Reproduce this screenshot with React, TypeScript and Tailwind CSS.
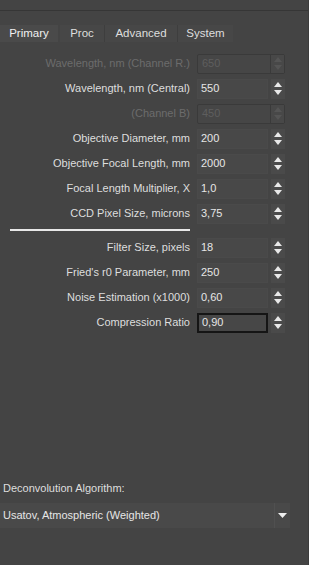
import React from "react";

const rows = [
  { label: "Wavelength, nm (Channel R.)", value: "650", disabled: true },
  { label: "Wavelength, nm (Central)", value: "550" },
  { label: "(Channel B)", value: "450", disabled: true },
  { label: "Objective Diameter, mm", value: "200" },
  { label: "Objective Focal Length, mm", value: "2000" },
  { label: "Focal Length Multiplier, X", value: "1,0" },
  { label: "CCD Pixel Size, microns", value: "3,75" },
];

const rows2 = [
  { label: "Filter Size, pixels", value: "18" },
  { label: "Fried's r0 Parameter, mm", value: "250" },
  { label: "Noise Estimation (x1000)", value: "0,60" },
  { label: "Compression Ratio", value: "0,90", focused: true },
];

const Spinner = ({ disabled }: { disabled?: boolean }) => (
  <div
    className={`flex h-full w-[14px] flex-col items-center justify-center gap-[3px] ${
      disabled ? "border-l border-[#3a3a3a] bg-[#484848]" : "bg-[#4a4a4a]"
    }`}
  >
    <svg width="8" height="5" viewBox="0 0 8 5">
      <path d="M0 5 L4 0 L8 5 Z" fill={disabled ? "#555" : "#e8e8e8"} />
    </svg>
    <svg width="8" height="5" viewBox="0 0 8 5">
      <path d="M0 0 L8 0 L4 5 Z" fill={disabled ? "#555" : "#e8e8e8"} />
    </svg>
  </div>
);

type Row = { label: string; value: string; disabled?: boolean; focused?: boolean };

const Field = ({ row }: { row: Row }) => (
  <div className="flex h-[25px] items-center">
    <div className={`w-[190px] text-right ${row.disabled ? "text-[#6c6c6c]" : "text-[#dedede]"}`}>
      {row.label}
    </div>
    {row.disabled ? (
      <div className="ml-[7px] flex h-[20px] w-[88px] items-center rounded-[2px] border border-[#3a3a3a] bg-[#464646]">
        <div className="flex-1 pl-[4px] text-[#5e5e5e]">{row.value}</div>
        <Spinner disabled />
      </div>
    ) : (
      <div className="ml-[7px] flex h-[20px] w-[88px] items-center">
        <div
          className={`flex h-full w-[71px] items-center pl-[3px] text-[#e6e6e6] ${
            row.focused ? "border-2 border-[#151515] bg-[#474747]" : "border border-[#4a4a4a] bg-[#484848]"
          }`}
        >
          {row.value}
        </div>
        <div className="ml-[3px] h-full">
          <Spinner />
        </div>
      </div>
    )}
  </div>
);

export default function App() {
  return (
    <div
      className="flex h-[565px] w-[309px] flex-col overflow-hidden border-r border-[#3c3c3c] bg-[#444444] text-[11px] text-[#dedede]"
      style={{ fontFamily: '"Liberation Sans", Arial, sans-serif' }}
    >
      <div className="mt-[10px] h-[1px] w-full bg-[#363636]" />
      <div className="mt-[14px] flex h-[17px] items-stretch text-[11.5px]">
        <div className="flex w-[58px] items-center justify-center bg-[#4a4a4a] text-[#f0f0f0]">Primary</div>
        <div className="ml-[2px] flex w-[45px] items-center justify-center border-r border-[#3e3e3e] bg-[#474747]">Proc</div>
        <div className="flex w-[73px] items-center justify-center border-r border-[#3e3e3e] bg-[#474747]">Advanced</div>
        <div className="flex w-[55px] items-center justify-center bg-[#474747]">System</div>
      </div>
      <div className="mt-[9px] flex flex-col">
        {rows.map((r) => (
          <Field key={r.label} row={r} />
        ))}
      </div>
      <div className="ml-[10px] mt-[3px] h-[2px] w-[180px] bg-[#e8e8e8]" />
      <div className="mt-[4px] flex flex-col">
        {rows2.map((r) => (
          <Field key={r.label} row={r} />
        ))}
      </div>
      <div className="mt-auto mb-[37px] flex flex-col">
        <div className="pl-[3px] text-[#dedede]">Deconvolution Algorithm:</div>
        <div className="mt-[7px] flex h-[25px] w-[290px] items-center bg-[#494949]">
          <div className="flex-1 pl-[3px] text-[#e6e6e6]">Usatov, Atmospheric (Weighted)</div>
          <div className="flex h-full w-[16px] items-center justify-center border-l border-[#505050]">
            <svg width="9" height="5" viewBox="0 0 9 5">
              <path d="M0 0 L9 0 L4.5 5 Z" fill="#f0f0f0" />
            </svg>
          </div>
        </div>
      </div>
    </div>
  );
}
